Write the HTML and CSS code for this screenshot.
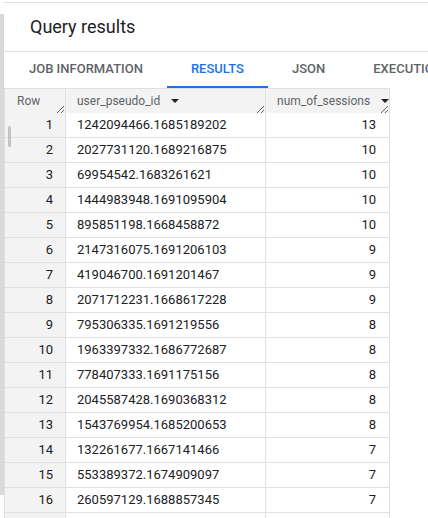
FILE: index.html
```html
<!DOCTYPE html>
<html>
<head>
<meta charset="utf-8">
<link rel="stylesheet" href="styles.css">
</head>
<body>
<div class="page">
  <div class="rail"><div class="rail-bar"></div></div>
  <div class="panel">
    <div class="title">Query results</div>
    <div class="tabs">
      <div class="tab">JOB INFORMATION</div>
      <div class="tab active">RESULTS</div>
      <div class="tab">JSON</div>
      <div class="tab">EXECUTION DETAILS</div>
    </div>
    <div class="grid">
      <div class="thumb"></div>
      <div class="row head">
        <div class="cell c-row">Row<svg class="handle" width="8" height="8" viewBox="0 0 8 8"><path d="M8 1L1 8M8 5L5 8" stroke="#5f6368" stroke-width="1" fill="none"/></svg></div>
        <div class="cell c-id">user_pseudo_id<span class="caret"></span><svg class="handle" width="8" height="8" viewBox="0 0 8 8"><path d="M8 1L1 8M8 5L5 8" stroke="#5f6368" stroke-width="1" fill="none"/></svg></div>
        <div class="cell c-num">num_of_sessions<span class="caret"></span><svg class="handle" width="8" height="8" viewBox="0 0 8 8"><path d="M8 1L1 8M8 5L5 8" stroke="#5f6368" stroke-width="1" fill="none"/></svg></div>
      </div>
      <div class="row"><div class="cell c-row">1</div><div class="cell c-id">1242094466.1685189202</div><div class="cell c-num">13</div></div>
      <div class="row"><div class="cell c-row">2</div><div class="cell c-id">2027731120.1689216875</div><div class="cell c-num">10</div></div>
      <div class="row"><div class="cell c-row">3</div><div class="cell c-id">69954542.1683261621</div><div class="cell c-num">10</div></div>
      <div class="row"><div class="cell c-row">4</div><div class="cell c-id">1444983948.1691095904</div><div class="cell c-num">10</div></div>
      <div class="row"><div class="cell c-row">5</div><div class="cell c-id">895851198.1668458872</div><div class="cell c-num">10</div></div>
      <div class="row"><div class="cell c-row">6</div><div class="cell c-id">2147316075.1691206103</div><div class="cell c-num">9</div></div>
      <div class="row"><div class="cell c-row">7</div><div class="cell c-id">419046700.1691201467</div><div class="cell c-num">9</div></div>
      <div class="row"><div class="cell c-row">8</div><div class="cell c-id">2071712231.1668617228</div><div class="cell c-num">9</div></div>
      <div class="row"><div class="cell c-row">9</div><div class="cell c-id">795306335.1691219556</div><div class="cell c-num">8</div></div>
      <div class="row"><div class="cell c-row">10</div><div class="cell c-id">1963397332.1686772687</div><div class="cell c-num">8</div></div>
      <div class="row"><div class="cell c-row">11</div><div class="cell c-id">778407333.1691175156</div><div class="cell c-num">8</div></div>
      <div class="row"><div class="cell c-row">12</div><div class="cell c-id">2045587428.1690368312</div><div class="cell c-num">8</div></div>
      <div class="row"><div class="cell c-row">13</div><div class="cell c-id">1543769954.1685200653</div><div class="cell c-num">8</div></div>
      <div class="row"><div class="cell c-row">14</div><div class="cell c-id">132261677.1667141466</div><div class="cell c-num">7</div></div>
      <div class="row"><div class="cell c-row">15</div><div class="cell c-id">553389372.1674909097</div><div class="cell c-num">7</div></div>
      <div class="row"><div class="cell c-row">16</div><div class="cell c-id">260597129.1688857345</div><div class="cell c-num">7</div></div>
      <div class="row"><div class="cell c-row"></div><div class="cell c-id"></div><div class="cell c-num"></div></div>
    </div>
  </div>
</div>
</body>
</html>
```

FILE: styles.css
```css
html, body {
  margin: 0;
  padding: 0;
  background: #ffffff;
}
body {
  font-family: Roboto, "Liberation Sans", Arial, sans-serif;
  color: #202124;
}
.page {
  display: flex;
  height: 518px;
  overflow: hidden;
}
.rail {
  width: 4px;
  flex: none;
  padding-top: 14px;
}
.rail-bar {
  height: 481px;
  background: #d9d9d9;
}
.panel {
  flex: 1;
  min-width: 0;
  margin-top: 2px;
  border-top: 1px solid #e0e0e0;
  overflow: hidden;
}
.title {
  height: 48px;
  line-height: 48px;
  padding-left: 26px;
  font-size: 18px;
  color: #202124;
  border-bottom: 1px solid #e0e0e0;
}
.tabs {
  display: flex;
  height: 36px;
  padding-left: 1px;
  white-space: nowrap;
}
.tab {
  flex: none;
  padding: 0 24px;
  height: 34px;
  line-height: 34px;
  border-bottom: 2px solid transparent;
  font-size: 13px;
  font-weight: 500;
  color: #5f6368;
}
.tab.active {
  color: #1a73e8;
  border-bottom-color: #1a73e8;
}
.grid {
  position: relative;
  width: 386px;
}
.row {
  display: flex;
  height: 25px;
  font-size: 13px;
}
.row.head {
  height: 25px;
  font-size: 12px;
  color: #5f6368;
}
.cell {
  position: relative;
  box-sizing: border-box;
  height: 25px;
  line-height: 24px;
  border-right: 1px solid #e0e0e0;
  border-bottom: 1px solid #e0e0e0;
  white-space: nowrap;
}
.head .cell {
  background: #f3f3f3;
  border-top: 1px solid #e0e0e0;
  border-bottom: none;
}
.c-row {
  width: 62px;
  border-left: 1px solid #e0e0e0;
  background: #f3f3f3;
  text-align: right;
  padding-right: 12px;
}
.head .c-row {
  text-align: left;
  padding-left: 12px;
}
.c-id {
  width: 200px;
  padding-left: 11px;
}
.c-num {
  width: 124px;
  text-align: right;
  padding-right: 13px;
}
.head .c-num {
  text-align: left;
  padding-left: 11px;
}
.caret {
  display: inline-block;
  width: 0;
  height: 0;
  margin-left: 11px;
  vertical-align: 2px;
  border-left: 4px solid transparent;
  border-right: 4px solid transparent;
  border-top: 4px solid #202124;
}
.handle {
  position: absolute;
  right: 1px;
  bottom: 0;
}
.thumb {
  position: absolute;
  left: 4px;
  top: 38px;
  width: 3px;
  height: 21px;
  border-radius: 2px;
  background: #c4c4c4;
  z-index: 2;
}
```
